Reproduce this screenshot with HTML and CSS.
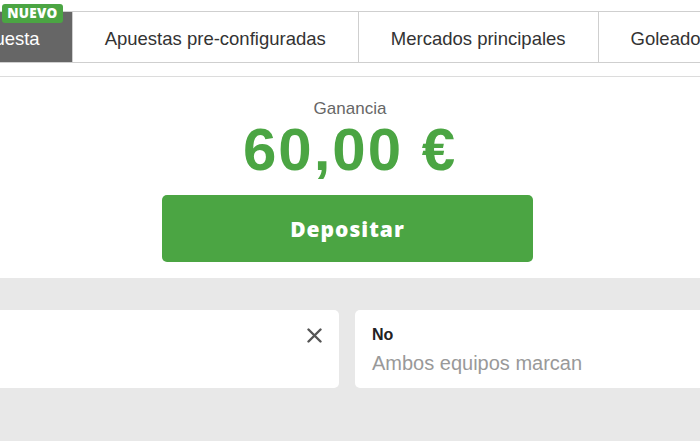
FILE: index.html
```html
<!DOCTYPE html>
<html lang="es">
<head>
  <meta charset="UTF-8" />
  <meta name="viewport" content="width=device-width, initial-scale=1" />
  <title>Ganancia</title>
  <link rel="stylesheet" href="styles.css">
</head>
<body>

  <header class="top">
    <nav class="tabs">
      <div class="tab active">
        Crea tu apuesta
        <span class="badge">NUEVO</span>
      </div>
      <div class="tab">Apuestas pre-configuradas</div>
      <div class="tab">Mercados principales</div>
      <div class="tab">Goleadores</div>
    </nav>
  </header>

  <section class="summary">
    <p class="label">Ganancia</p>
    <p class="amount">60,00 €</p>
    <button type="button" class="deposit">Depositar</button>
  </section>

  <section class="selections">
    <div class="cards">
      <div class="card">
        <!-- close icon -->
        <svg class="close" width="15" height="15" viewBox="0 0 15 15">
          <path d="M1.5 1.5 L13.5 13.5 M13.5 1.5 L1.5 13.5" stroke="#555" stroke-width="2.4" stroke-linecap="round" />
        </svg>
      </div>
      <div class="card">
        <p class="pick">No</p>
        <p class="market">Ambos equipos marcan</p>
      </div>
    </div>
  </section>

</body>
</html>
```

FILE: styles.css
```css
body {
  font-family: 'Liberation Sans', Arial, sans-serif;
  background: #e8e8e8;
  margin: 0;
  padding: 0;
  overflow: hidden;
}

p {
  margin: 0;
}

.top {
  background: white;
  padding: 11px 0 13px;
  border-bottom: 1px solid #dcdcdc;
  overflow: hidden;
}

/* tab strip is scrolled a bit, first tab is half hidden */
.tabs {
  display: flex;
  margin-left: -124px;
  border-top: 1px solid #cfcfcf;
  border-bottom: 1px solid #cfcfcf;
}

.tab {
  flex: none;
  position: relative;
  padding: 4px 32px 0;
  height: 46px;
  line-height: 46px;
  font-size: 18.5px;
  color: #333;
  white-space: nowrap;
  border-right: 1px solid #cfcfcf;
}

.tab.active {
  background-color: #666;
  color: white;
}

.badge {
  position: absolute;
  top: -8px;
  right: 9px;
  background: #4ba543;
  color: white;
  font-family: 'Open Sans', sans-serif;
  font-weight: 800;
  font-size: 13.5px;
  letter-spacing: 0.3px;
  line-height: 19px;
  padding: 0 5px;
  border-radius: 3px;
}

.summary {
  background: white;
  padding: 22px 0 16px;
  text-align: center;
}

.label {
  font-size: 17px;
  line-height: 20px;
  color: #666;
}

.amount {
  font-size: 60px;
  line-height: 60px;
  font-weight: bold;
  letter-spacing: 2px;
  color: #4ba543;
  margin-top: 1px;
}

.deposit {
  display: block;
  margin: 15px 0 0 calc(50% - 188px);
  width: 371px;
  height: 67px;
  background-color: #4ba543;
  color: white;
  border: none;
  border-radius: 5px;
  font-family: 'Open Sans', sans-serif;
  font-weight: 800;
  font-size: 21px;
  letter-spacing: 1px;
  cursor: pointer;
}

.selections {
  padding: 32px 0;
}

.cards {
  display: grid;
  grid-template-columns: 1fr 1fr;
  gap: 16px;
  margin: 0 -5px 0 -11px;
}

.card {
  background: white;
  border-radius: 5px;
  height: 78px;
  box-sizing: border-box;
  padding: 15px 17px 12px;
  position: relative;
}

.close {
  display: block;
  margin: 3px 0 0 auto;
}

.pick {
  font-size: 16px;
  line-height: 19px;
  font-weight: bold;
  color: #222;
}

.market {
  margin-top: 8px;
  font-size: 20px;
  line-height: 23px;
  color: #999;
}
```
